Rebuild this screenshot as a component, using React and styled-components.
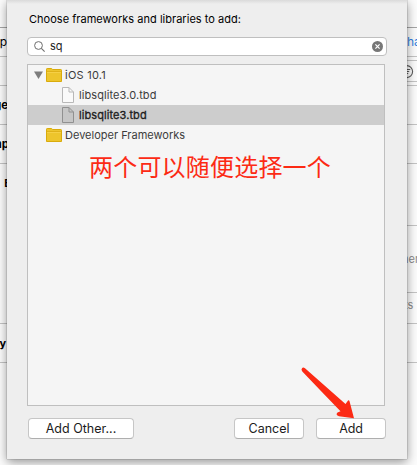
import React from "react";
import styled, { createGlobalStyle } from "styled-components";

const Global = createGlobalStyle`
  * { box-sizing: border-box; }
  body { margin: 0; background: #fff; overflow: hidden; }
`;

const Window = styled.div`
  display: grid;
  grid-template-columns: 7px 400px 10px;
  width: 417px;
  height: 465px;
  overflow: hidden;
  background: #fcfcfc;
  font-family: Inter, "Noto Sans CJK SC", sans-serif;
  font-size: 12px;
`;

const Gutter = styled.div`
  display: flex;
  flex-direction: column;
  overflow: hidden;
`;

const Strip = styled.div`
  flex: none;
  display: flex;
  justify-content: ${(p) => (p.$end ? "flex-end" : "flex-start")};
  height: ${(p) => p.$h}px;
  padding-top: ${(p) => p.$top || 0}px;
  border-bottom: ${(p) => (p.$last ? "0" : "1px")} solid ${(p) => p.$line || "#c4c4c4"};
  overflow: hidden;
  line-height: 14px;
  white-space: nowrap;
`;

const Peek = styled.span`
  flex: none;
  margin-left: ${(p) => p.$left || 0}px;
  margin-right: ${(p) => p.$right || 0}px;
  color: ${(p) => p.$color || "#000"};
  font-size: ${(p) => p.$size || 12}px;
  font-weight: ${(p) => p.$weight || 400};
`;

const Sheet = styled.main`
  z-index: 1;
  display: flex;
  flex-direction: column;
  height: 459px;
  padding: 12px 20px 0;
  background: linear-gradient(#dadada, #eee 4px);
  box-shadow: 0 0 1px rgba(0, 0, 0, 0.55), 0 3px 10px rgba(0, 0, 0, 0.42);
`;

const Title = styled.h1`
  margin: 0 0 0 2px;
  height: 25px;
  font-size: 11px;
  font-weight: 400;
  line-height: 15px;
  letter-spacing: 0.02px;
  color: #000;
  white-space: nowrap;
`;

const SearchField = styled.div`
  display: flex;
  align-items: center;
  flex: none;
  height: 19px;
  padding: 0 3px 0 6px;
  border: 1px solid #bfbfbf;
  border-radius: 4px;
  background: #fff;
`;

const Query = styled.span`
  flex: 1;
  margin-left: 5px;
  font-size: 11px;
  line-height: 15px;
  color: #222;
`;

const Tree = styled.section`
  flex: none;
  width: 358px;
  height: 342px;
  margin-top: 8px;
  border: 1px solid #bfbfbf;
  background: #f5f5f5;
`;

const Row = styled.div`
  display: flex;
  align-items: center;
  height: 20px;
  padding-left: ${(p) => p.$indent}px;
  background: ${(p) => (p.$selected ? "#cdcdcd" : "transparent")};
`;

const RowLabel = styled.span`
  margin-left: ${(p) => p.$gap}px;
  font-size: 11px;
  line-height: 20px;
  letter-spacing: ${(p) => p.$track || 0}px;
  color: ${(p) => (p.$strong ? "#1c1c1c" : "#3c3c3c")};
  -webkit-text-stroke: ${(p) => (p.$strong ? "0.3px #1c1c1c" : "0")};
  white-space: nowrap;
`;

const Note = styled.p`
  margin: 3px 0 0 61px;
  font-family: "Noto Sans CJK SC", sans-serif;
  font-size: 24px;
  line-height: 36px;
  letter-spacing: 0.2px;
  color: #fc2a14;
  white-space: nowrap;
`;

const Footer = styled.footer`
  display: flex;
  margin: 12px 1px 0;
`;

const Button = styled.button`
  width: ${(p) => p.$w}px;
  height: 21px;
  margin: 0 0 0 ${(p) => p.$left || 0}px;
  padding: 0;
  border: 1px solid #c6c6c6;
  border-bottom-color: #aeaeae;
  border-radius: 4px;
  background: #fff;
  font-family: Inter, sans-serif;
  font-size: 12.5px;
  line-height: 19px;
  letter-spacing: ${(p) => p.$track || 0}px;
  color: #1c1c1c;
  white-space: nowrap;
`;

const Spacer = styled.span`
  width: 3px;
`;

const Arrow = styled.svg`
  position: absolute;
  left: 296px;
  top: 362px;
  z-index: 2;
`;

const SearchIcon = () => (
  <svg width="11" height="11" viewBox="0 0 11 11" fill="none" stroke="#6d6d6d">
    <circle cx="4.5" cy="4.5" r="3.9" />
    <path d="M7.4 7.4 10.6 10.6" strokeWidth="1.1" />
  </svg>
);

const ClearIcon = () => (
  <svg width="11" height="11" viewBox="0 0 11 11">
    <circle cx="5.5" cy="5.5" r="5.5" fill="#777" />
    <path d="M3.4 3.4 7.6 7.6M7.6 3.4 3.4 7.6" stroke="#fff" strokeWidth="1.2" />
  </svg>
);

const Disclosure = () => (
  <svg width="9" height="8" viewBox="0 0 9 8">
    <path d="M0 .5H9L4.5 8Z" fill="#7d7d7d" />
  </svg>
);

const FolderIcon = () => (
  <svg width="16" height="14" viewBox="0 0 16 14">
    <path d="M.5 1.2Q.5.5 1.2.5H5.6L6.7 1.5H14.8Q15.5 1.5 15.5 2.2V13.5H.5Z" fill="#edc52c" stroke="#d9ab0c" />
    <path d="M1 3.5H15" stroke="#dfb21a" />
    <path d="M1 4.5H15" stroke="#f5d046" />
  </svg>
);

const FileIcon = ({ selected }) => (
  <svg width="12" height="16" viewBox="0 0 12 16">
    <path
      d="M.5.5H7L11.5 5V15.5H.5Z"
      fill={selected ? "#c6c6c6" : "#fafafa"}
      stroke={selected ? "#909090" : "#b8b8b8"}
    />
    <path d="M7 .5V5H11.5" fill="none" stroke={selected ? "#909090" : "#b8b8b8"} />
  </svg>
);

const FilterIcon = () => (
  <svg width="10" height="20" viewBox="0 0 10 20" fill="none" stroke="#5c5c5c">
    <circle cx="-.4" cy="10.6" r="6" strokeWidth="1.1" />
    <path d="M-3 8.5H3.2M-2 10.5H2.2M-1 12.5H1.2" />
  </svg>
);

export default function App() {
  return (
    <>
      <Global />
      <Window>
        <Gutter>
          <Strip $h={28} $line="#a5a5a5" />
          <Strip $end $h={29} $top={7}><Peek $size={12}>p</Peek></Strip>
          <Strip $h={29} />
          <Strip $end $h={39} $top={12}><Peek $size={11.5} $weight={700} $right={-1}>ge</Peek></Strip>
          <Strip $end $h={39} $top={12}><Peek $size={11.5} $weight={700} $right={-2}>mp</Peek></Strip>
          <Strip $end $h={160} $top={12}><Peek $size={11} $weight={700} $right={-4}>E</Peek></Strip>
          <Strip $end $h={39} $top={12}><Peek $size={11} $weight={700} $right={1}>y</Peek></Strip>
          <Strip $h={102} $last />
        </Gutter>
        <Sheet>
          <Title>Choose frameworks and libraries to add:</Title>
          <SearchField>
            <SearchIcon />
            <Query>sq</Query>
            <ClearIcon />
          </SearchField>
          <Tree>
            <Row $indent={6}>
              <Disclosure />
              <Spacer />
              <FolderIcon />
              <RowLabel $gap={3} $track={0.25}>iOS 10.1</RowLabel>
            </Row>
            <Row $indent={34}>
              <FileIcon />
              <RowLabel $gap={5} $track={0.08}>libsqlite3.0.tbd</RowLabel>
            </Row>
            <Row $indent={34} $selected>
              <FileIcon selected />
              <RowLabel $gap={5} $track={0.08} $strong>libsqlite3.tbd</RowLabel>
            </Row>
            <Row $indent={18}>
              <FolderIcon />
              <RowLabel $gap={3}>Developer Frameworks</RowLabel>
            </Row>
            <Note>两个可以随便选择一个</Note>
          </Tree>
          <Footer>
            <Button $w={106}>Add Other...</Button>
            <Button $w={70} $left={100}>Cancel</Button>
            <Button $w={70} $left={12} $track={-0.2}>Add</Button>
          </Footer>
        </Sheet>
        <Gutter>
          <Strip $h={28} $line="#a5a5a5" />
          <Strip $h={29} $top={7}><Peek $color="#2f7fe0">ha</Peek></Strip>
          <Strip $h={4} />
          <Strip $h={21}><FilterIcon /></Strip>
          <Strip $h={4} />
          <Strip $h={39} />
          <Strip $h={39} />
          <Strip $h={62} />
          <Strip $h={67} $top={26}><Peek $size={11} $color="#8a8a8a" $left={-5}>ner</Peek></Strip>
          <Strip $h={31} $top={5}><Peek $size={11} $color="#8a8a8a" $left={-3}>ts</Peek></Strip>
          <Strip $h={39} />
          <Strip $h={102} $last />
        </Gutter>
      </Window>
      <Arrow width="62" height="58" viewBox="0 0 62 58">
        <path
          d="M6 6.2Q7 4.8 9 6.2L49.5 42 51.5 39.2Q52.8 37.2 53.6 39.5L58 56.2 43 54.2Q39 53 41.5 50.6L44.5 49.3Q26 30 6.3 9.4Q4.8 7.8 6 6.2Z"
          fill="#fc2a14"
        />
      </Arrow>
    </>
  );
}
